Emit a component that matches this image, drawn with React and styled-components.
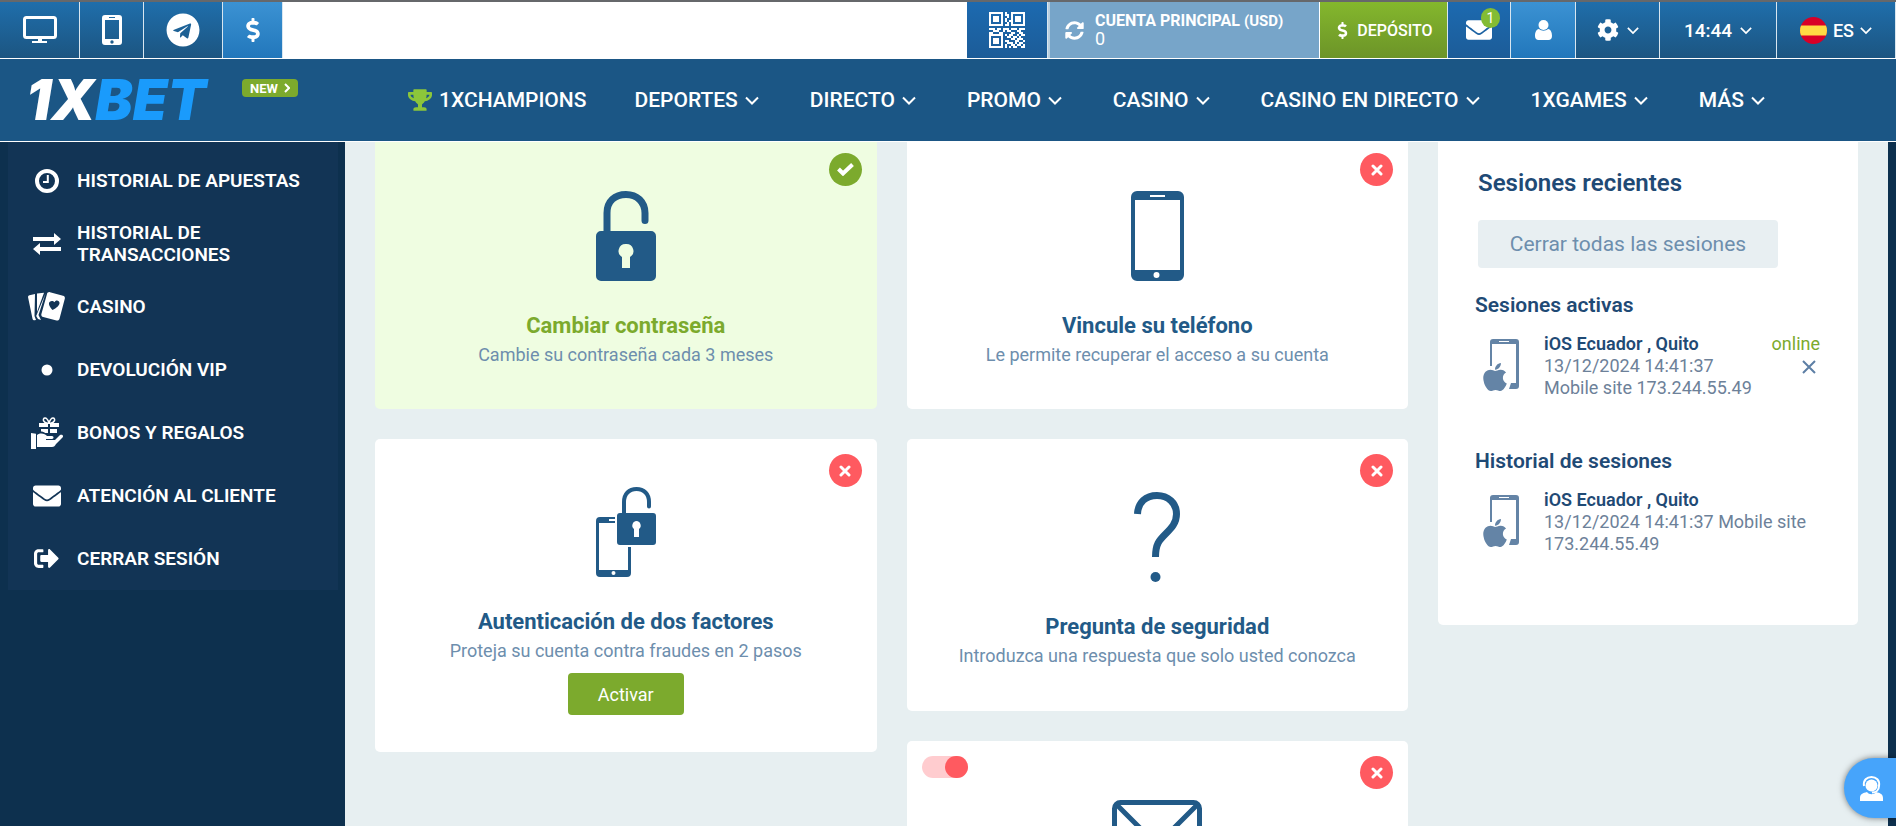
import React, { useState } from "react";
import styled, { createGlobalStyle } from "styled-components";
import {
  FaTelegram,
  FaDollarSign,
  FaSyncAlt,
  FaEnvelope,
  FaCog,
  FaTrophy,
  FaSignOutAlt,
  FaApple,
} from "react-icons/fa";

const GlobalStyle = createGlobalStyle`
  * {
    box-sizing: border-box;
  }
  body {
    margin: 0;
    background: #0d304e;
    font-family: Roboto, "Open Sans", sans-serif;
  }
  button {
    font-family: inherit;
    border: none;
    cursor: pointer;
  }
  a {
    text-decoration: none;
    color: inherit;
  }
  svg {
    display: block;
    flex: none;
  }
`;

const Page = styled.div`
  height: 100vh;
  overflow: hidden;
  display: flex;
  flex-direction: column;
`;

const TopBar = styled.header`
  flex: none;
  display: flex;
  height: 59px;
  background: #fff;
  border-top: 2px solid #66686b;
  border-bottom: 1px solid #fff;
`;

const Spacer = styled.div`
  flex: 1;
`;

const tones = {
  blue: "linear-gradient(#1f6eab, #1c5581)",
  bright: "linear-gradient(#1c6ab0, #1c5c98)",
  light: "linear-gradient(#3b92d3, #2277bb)",
  green: "linear-gradient(#84b72d, #6c9428)",
};

const Cell = styled.button`
  display: flex;
  align-items: center;
  justify-content: center;
  gap: ${(p) => p.$gap || 8}px;
  width: ${(p) => p.$w}px;
  padding: 0;
  border-right: 1px solid #d8e6f0;
  background: ${(p) => tones[p.$tone || "blue"]};
  color: #fff;
  font-size: ${(p) => p.$size || 18}px;
  font-weight: ${(p) => p.$weight || 400};
`;

const Account = styled.button`
  display: flex;
  align-items: center;
  gap: 11px;
  width: 272px;
  padding: 0 0 0 15px;
  border-left: 2px solid #b9cfe0;
  border-right: 1px solid #fff;
  background: #77a5c9;
  color: #fff;
  text-align: left;
`;

const AccountText = styled.span`
  font-size: 16px;
  line-height: 18px;
  font-weight: 700;
`;

const Currency = styled.small`
  font-size: 15px;
`;

const Balance = styled.span`
  display: block;
  font-size: 18px;
  font-weight: 400;
`;

const MailWrap = styled.span`
  position: relative;
`;

const Counter = styled.span`
  position: absolute;
  top: -9px;
  right: -8px;
  width: 19px;
  height: 20px;
  border-radius: 10px;
  background: #83bc34;
  font-size: 14px;
  line-height: 20px;
  text-align: center;
`;

const NavBar = styled.nav`
  flex: none;
  display: flex;
  align-items: center;
  height: 83px;
  padding-left: 26px;
  background: #1b5685;
  border-bottom: 1px solid #fff;
  color: #fff;
`;

const Logo = styled.a`
  width: 216px;
  font-family: Inter, sans-serif;
  font-size: 56px;
  line-height: 82px;
  font-weight: 900;
  font-style: italic;
`;

const LogoBlue = styled.span`
  color: #1a9bfc;
`;

const NewBadge = styled.a`
  display: flex;
  align-items: center;
  justify-content: center;
  gap: 6px;
  width: 56px;
  height: 18px;
  margin-bottom: 24px;
  border-radius: 4px;
  background: #7caa2d;
  font-size: 13px;
  font-weight: 700;
`;

const Menu = styled.ul`
  display: flex;
  gap: 51px;
  margin: 0 0 0 110px;
  padding: 0;
  list-style: none;

  li:first-child {
    margin-right: -3px;
  }
`;

const MenuLink = styled.a`
  display: flex;
  align-items: center;
  gap: 7px;
  font-size: 21px;
  font-weight: 500;
  white-space: nowrap;
`;

const Body = styled.div`
  flex: 1;
  min-height: 0;
  display: flex;
  padding-right: 8px;
`;

const Sidebar = styled.aside`
  flex: none;
  width: 345px;
  padding: 0 7px 0 8px;
`;

const SideMenu = styled.ul`
  margin: 0;
  padding: 7px 0 0;
  background: #123455;
  list-style: none;
`;

const SideLink = styled.a`
  display: flex;
  align-items: center;
  gap: 12px;
  height: 63px;
  padding: 0 20px;
  color: #fff;
  font-size: 19px;
  line-height: 22px;
  font-weight: 600;
`;

const SideIcon = styled.span`
  flex: none;
  display: flex;
  justify-content: center;
  width: 37px;
`;

const Content = styled.main`
  flex: 1;
  overflow: hidden;
  background: #e7eff1;
`;

const Grid = styled.div`
  display: grid;
  grid-template-columns: 1fr 1fr 420px;
  align-items: start;
  gap: 30px;
  margin-top: -4px;
  padding: 0 30px;
`;

const Column = styled.div`
  display: flex;
  flex-direction: column;
  gap: 30px;
`;

const CardBox = styled.section`
  position: relative;
  display: flex;
  flex-direction: column;
  align-items: center;
  padding: ${(p) => p.$top || 53}px 20px ${(p) => p.$bottom || 41}px;
  border-radius: 5px;
  background: ${(p) => (p.$done ? "#effde1" : "#fff")};
  color: ${(p) => (p.$done ? "#7caa2d" : "#225a87")};
  text-align: center;
`;

const CardIcon = styled.div`
  height: 90px;
  color: #225a87;
`;

const CardTitle = styled.h2`
  margin: 30px 0 0;
  font-size: 22px;
  line-height: 30px;
  font-weight: 700;
`;

const CardText = styled.p`
  margin: 1px 0 0;
  color: #6d8ead;
  font-size: 18px;
  line-height: 26px;
`;

const Badge = styled.span`
  position: absolute;
  top: 15px;
  right: 15px;
  display: flex;
  align-items: center;
  justify-content: center;
  width: 33px;
  height: 33px;
  border-radius: 50%;
  background: ${(p) => (p.$done ? "#7caa2d" : "#ff5a60")};
  color: #fff;
`;

const Activate = styled.button`
  width: 116px;
  height: 42px;
  margin-top: 9px;
  border-radius: 4px;
  background: #7caa2d;
  color: #fff;
  font-size: 18px;
`;

const Toggle = styled.input`
  position: absolute;
  top: 15px;
  left: 15px;
  appearance: none;
  width: 46px;
  height: 22px;
  margin: 0;
  border-radius: 11px;
  background: #ffcccf;
  cursor: pointer;

  &::before {
    content: "";
    display: block;
    width: 23px;
    height: 22px;
    border-radius: 11px;
    background: #ff5a60;
  }

  &:checked::before {
    margin-left: 23px;
  }
`;

const Sessions = styled.section`
  padding: 30px 38px 70px 37px;
  border-radius: 5px;
  background: #fff;
  color: #1f4a75;
`;

const SessionsTitle = styled.h2`
  margin: 0 0 22px 3px;
  font-size: 24px;
  line-height: 30px;
  font-weight: 600;
`;

const CloseAll = styled.button`
  width: 300px;
  height: 48px;
  margin-left: 3px;
  padding: 0;
  border-radius: 4px;
  background: #e8eff2;
  color: #6d8ead;
  font-size: 21px;
`;

const Subtitle = styled.h3`
  margin: ${(p) => p.$top}px 0 15px;
  font-size: 21px;
  line-height: 26px;
  font-weight: 600;
`;

const Session = styled.div`
  display: flex;
  color: #6d8199;
  font-size: 18px;
  line-height: 22px;
`;

const SessionIcon = styled.div`
  width: 69px;
  padding: 6px 0 0 8px;
  color: #6484a6;
`;

const SessionInfo = styled.div`
  flex: 1;
`;

const Device = styled.strong`
  display: block;
  color: #1f4a75;
  font-weight: 600;
`;

const Line = styled.span`
  display: block;
`;

const SessionState = styled.div`
  display: flex;
  flex-direction: column;
  align-items: flex-end;
  color: #7caa2d;
`;

const CloseSession = styled.button`
  padding: 5px 4px;
  background: none;
  color: #5d7fa5;
`;

const Support = styled.button`
  position: fixed;
  right: 0;
  bottom: 8px;
  display: flex;
  align-items: center;
  width: 52px;
  height: 60px;
  padding: 0 0 0 16px;
  border-radius: 30px 0 0 30px;
  background: #46a4fb;
  box-shadow: 0 0 6px rgba(0, 0, 0, 0.5);
  color: #fff;
`;

const Chevron = ({ width = 14, right }) => (
  <svg width={right ? 6 : width} height={right ? 10 : 9} viewBox={right ? "0 0 6 10" : "0 0 14 9"} fill="none" stroke="currentColor" strokeWidth="2">
    <path d={right ? "M1 1l4 4-4 4" : "M1 1.500l6 6 6-6"} />
  </svg>
);

const DesktopIcon = () => (
  <svg width="34" height="28" viewBox="0 0 34 28">
    <rect x="1.500" y="1.500" width="31" height="20" rx="2" fill="none" stroke="currentColor" strokeWidth="3" />
    <path d="M15 22h4v3h5v2H9v-2h6z" fill="currentColor" />
  </svg>
);

const MobileIcon = () => (
  <svg width="20" height="30" viewBox="0 0 20 30">
    <path
      fill="currentColor"
      fillRule="evenodd"
      d="M3 0h14a3 3 0 0 1 3 3v24a3 3 0 0 1-3 3H3a3 3 0 0 1-3-3V3a3 3 0 0 1 3-3zM3 5v19h14V5zM7 2v1h6V2zM10 25.300a1.700 1.700 0 1 0 0 3.400 1.700 1.700 0 0 0 0-3.400z"
    />
  </svg>
);

const qrRows = [
  "111111101001111111",
  "100000101101000001",
  "101110100101011101",
  "101110101001011101",
  "101110101011011101",
  "100000100101000001",
  "111111101101111111",
  "000000000000000000",
  "111011011101110111",
  "001110010110001100",
  "110001100001100110",
  "111111101011001011",
  "100000100110110100",
  "101110100001101110",
  "101110101100011001",
  "101110100111010110",
  "100000101001101101",
  "111111101010110011",
];

const QrIcon = () => (
  <svg width="36" height="36" viewBox="0 0 18 18" shapeRendering="crispEdges">
    {qrRows.map((row, y) =>
      row.split("").map((c, x) => (c === "1" ? <rect key={`${x}-${y}`} x={x} y={y} width="1" height="1" fill="currentColor" /> : null))
    )}
  </svg>
);

const UserIcon = () => (
  <svg width="17" height="20" viewBox="0 0 17 20" fill="currentColor">
    <circle cx="8.500" cy="5" r="5" />
    <path d="M4 9c-3 .5-4 3.500-4 7 0 2.500 1.500 4 3.500 4h10c2 0 3.500-1.500 3.500-4 0-3.500-1-6.500-4-7-1.200 1-2.700 1.700-4.500 1.700S5.200 10 4 9z" />
  </svg>
);

const SpainFlag = () => (
  <svg width="27" height="27" viewBox="0 0 27 27">
    <clipPath id="flag">
      <circle cx="13.500" cy="13.500" r="13.500" />
    </clipPath>
    <g clipPath="url(#flag)">
      <path fill="#d80027" d="M0 0h27v27H0z" />
      <path fill="#ffda44" d="M0 8.500h27v10H0z" />
    </g>
  </svg>
);

const ClockIcon = () => (
  <svg width="24" height="24" viewBox="0 0 24 24" fill="none" stroke="currentColor">
    <circle cx="12" cy="12" r="10" strokeWidth="4" />
    <path d="M12.800 6v7H8" strokeWidth="2" />
  </svg>
);

const ExchangeIcon = () => (
  <svg width="28" height="22" viewBox="0 0 28 22" fill="currentColor">
    <path d="M0 4h21V0l7 6-7 6V8H0zM28 18H7v4l-7-6 7-6v4h21z" />
  </svg>
);

const CardsIcon = () => (
  <svg width="37" height="29" viewBox="0 0 37 29" fill="currentColor">
    <path d="M0 5c0-1 .5-1.500 1.500-1.800L7 2l-.5 22 1.500 4-1.500.3c-1 0-1.700-.5-2-1.500z" />
    <path d="M9 1.500L16 .8 9 20z" />
    <path d="M17.500 1.500L10.500 23l2.500 5-3-1-1.800-3z" />
    <path
      fillRule="evenodd"
      d="M22 .2l13 3.600c1.500.4 2.200 1.600 1.800 3l-5.300 20c-.4 1.500-1.600 2.100-3 1.700L15.200 25c-1.500-.4-2.200-1.600-1.800-3L19 2C19.400.5 20.600-.2 22 .2zM24.500 18c4-2 7-4.500 7-7 0-3-4-3.500-5-.8-2-2.400-6-1-5.500 2 .3 2.200 2 4 3.500 5.800z"
    />
  </svg>
);

const GiftIcon = () => (
  <svg width="32" height="32" viewBox="0 0 32 32" fill="currentColor">
    <path d="M0 16l5 .8V32H0zM6 18c4-3 8-1 10 1h5c2 0 2 3 0 3h-6v1h9l5-5c2-1 4 .5 2.500 2.500L25 27c-1 2-2 3-4 3H6z" />
    <path d="M8 6h9v4H8zM19 6h9v4h-9zM10 12h7v4h-3c-1-1-2.500-1.500-4-1.500zM19 12h7v4h-7z" />
    <path d="M18 6c-6 1-7-5-4-5 2 0 3 2 4 5zm0 0c6 1 7-5 4-5-2 0-3 2-4 5z" fill="none" stroke="currentColor" strokeWidth="1.500" />
  </svg>
);

const DotIcon = () => (
  <svg width="12" height="12" viewBox="0 0 12 12">
    <circle cx="6" cy="6" r="5.500" fill="currentColor" />
  </svg>
);

const PadlockIcon = () => (
  <svg width="60" height="90" viewBox="0 0 60 90">
    <path d="M11 44V22C11 10 19 3.500 30 3.500S49 11 49 22v7.500" fill="none" stroke="currentColor" strokeWidth="7" strokeLinecap="round" />
    <path
      fill="currentColor"
      fillRule="evenodd"
      d="M5 40h50a5 5 0 0 1 5 5v40a5 5 0 0 1-5 5H5a5 5 0 0 1-5-5V45a5 5 0 0 1 5-5zM30 53a7 7 0 0 0-4 13v11h8V66a7 7 0 0 0-4-13z"
    />
  </svg>
);

const PhoneIcon = () => (
  <svg width="53" height="90" viewBox="0 0 53 90">
    <path
      fill="currentColor"
      fillRule="evenodd"
      d="M6 0h41a6 6 0 0 1 6 6v78a6 6 0 0 1-6 6H6a6 6 0 0 1-6-6V6a6 6 0 0 1 6-6zM4 9v70h45V9zM19 4v2h15V4zM25.500 81a3 3 0 1 0 0 6 3 3 0 0 0 0-6z"
    />
  </svg>
);

const TwoFactorIcon = () => (
  <svg width="60" height="90" viewBox="0 0 60 90">
    <path
      fill="currentColor"
      fillRule="evenodd"
      d="M4 30h15v2h-6v2h6v2H3v47h29V60h3v26a4 4 0 0 1-4 4H4a4 4 0 0 1-4-4V34a4 4 0 0 1 4-4zM17.500 84a2 2 0 1 0 0 4 2 2 0 0 0 0-4z"
    />
    <path d="M28 28V15C28 7 33 2 40.500 2S53 7 53 15v4.500" fill="none" stroke="currentColor" strokeWidth="4" strokeLinecap="round" />
    <path
      fill="currentColor"
      fillRule="evenodd"
      d="M24 26h33a3 3 0 0 1 3 3v26a3 3 0 0 1-3 3H24a3 3 0 0 1-3-3V29a3 3 0 0 1 3-3zM40.500 34a4.500 4.500 0 0 0-2.500 8v8h5v-8a4.500 4.500 0 0 0-2.500-8z"
    />
  </svg>
);

const QuestionIcon = () => (
  <svg width="46" height="90" viewBox="0 0 46 90">
    <path d="M3.500 22C4 10 12 3.500 23 3.500S42.500 11 42.500 22c0 9-5 14-11 20C25 48.500 21.500 52 21.500 65" fill="none" stroke="currentColor" strokeWidth="7" />
    <circle cx="21.500" cy="85" r="5" fill="currentColor" />
  </svg>
);

const MailIcon = () => (
  <svg width="90" height="68" viewBox="0 0 90 68" fill="none" stroke="currentColor" strokeWidth="5">
    <rect x="2.500" y="2.500" width="85" height="63" rx="6" />
    <path d="M4 4l36 36c3 3 7 3 10 0L86 4" />
  </svg>
);

const CrossIcon = () => (
  <svg width="12" height="12" viewBox="0 0 12 12" stroke="currentColor" strokeWidth="3" strokeLinecap="round">
    <path d="M2 2l8 8M10 2l-8 8" />
  </svg>
);

const CheckIcon = () => (
  <svg width="17" height="13" viewBox="0 0 17 13" fill="none" stroke="currentColor" strokeWidth="4">
    <path d="M1.500 6L6 10.500 15.500 1.500" />
  </svg>
);

const ThinCross = () => (
  <svg width="14" height="14" viewBox="0 0 14 14" stroke="currentColor" strokeWidth="2">
    <path d="M1 1l12 12M13 1L1 13" />
  </svg>
);

const ApplePhoneIcon = () => (
  <svg width="36" height="53" viewBox="0 0 36 53">
    <path
      fill="currentColor"
      fillRule="evenodd"
      d="M10 0h23a3 3 0 0 1 3 3v44a3 3 0 0 1-3 3h-7l2-6h5V5H9v22H7V3a3 3 0 0 1 3-3zM16 2v1h10V2z"
    />
    <FaApple x="-4" y="22" size={32} />
  </svg>
);

const SupportIcon = () => (
  <svg width="23" height="25" viewBox="0 0 23 25" fill="currentColor">
    <circle cx="11.500" cy="9.500" r="6" />
    <path d="M4 10C3 4 7 1 11.500 1S20 4 19 10c0 4-3 6.500-7 6.500" fill="none" stroke="currentColor" strokeWidth="2" />
    <path d="M0 25v-3c0-4 3-5 7-6 2 3 7 3 9 0 4 1 7 2 7 6v3z" />
  </svg>
);

const menu = ["DEPORTES", "DIRECTO", "PROMO", "CASINO", "CASINO EN DIRECTO", "1XGAMES", "MÁS"];

const sideItems = [
  { name: "HISTORIAL DE APUESTAS", icon: <ClockIcon /> },
  { name: "HISTORIAL DE TRANSACCIONES", icon: <ExchangeIcon /> },
  { name: "CASINO", icon: <CardsIcon /> },
  { name: "DEVOLUCIÓN VIP", icon: <DotIcon /> },
  { name: "BONOS Y REGALOS", icon: <GiftIcon /> },
  { name: "ATENCIÓN AL CLIENTE", icon: <FaEnvelope size={28} /> },
  { name: "CERRAR SESIÓN", icon: <FaSignOutAlt size={25} /> },
];

function Card({ icon, title, text, done, top, bottom, children }) {
  return (
    <CardBox $done={done} $top={top} $bottom={bottom}>
      <Badge $done={done}>{done ? <CheckIcon /> : <CrossIcon />}</Badge>
      <CardIcon>{icon}</CardIcon>
      {title && <CardTitle>{title}</CardTitle>}
      {text && <CardText>{text}</CardText>}
      {children}
    </CardBox>
  );
}

function App() {
  const [mailLogin, setMailLogin] = useState(true);

  return (
    <Page>
      <GlobalStyle />
      <TopBar>
        <Cell $w={80} aria-label="Escritorio"><DesktopIcon /></Cell>
        <Cell $w={64} aria-label="Móvil"><MobileIcon /></Cell>
        <Cell $w={79} aria-label="Telegram"><FaTelegram size={34} /></Cell>
        <Cell $w={60} $tone="light" aria-label="Pagos"><FaDollarSign size={24} /></Cell>
        <Spacer />
        <Cell $w={81} $tone="bright" aria-label="Código QR"><QrIcon /></Cell>
        <Account>
          <FaSyncAlt size={19} />
          <AccountText>
            CUENTA PRINCIPAL <Currency>(USD)</Currency>
            <Balance>0</Balance>
          </AccountText>
        </Account>
        <Cell $w={128} $tone="green" $size={16} $weight={500} $gap={6}>
          <FaDollarSign size={17} />
          DEPÓSITO
        </Cell>
        <Cell $w={63} $tone="bright" aria-label="Mensajes">
          <MailWrap>
            <FaEnvelope size={26} />
            <Counter>1</Counter>
          </MailWrap>
        </Cell>
        <Cell $w={65} $tone="light" aria-label="Mi cuenta"><UserIcon /></Cell>
        <Cell $w={84} aria-label="Ajustes">
          <FaCog size={22} />
          <Chevron width={12} />
        </Cell>
        <Cell $w={117} $size={19} $weight={500}>
          14:44
          <Chevron width={12} />
        </Cell>
        <Cell $w={119} $gap={6} $weight={500}>
          <SpainFlag />
          ES
          <Chevron width={12} />
        </Cell>
      </TopBar>

      <NavBar>
        <Logo href="#">
          1X<LogoBlue>BET</LogoBlue>
        </Logo>
        <NewBadge href="#">
          NEW
          <Chevron right />
        </NewBadge>
        <Menu>
          <li>
            <MenuLink href="#">
              <FaTrophy size={24} color="#8cc63a" />
              1XCHAMPIONS
            </MenuLink>
          </li>
          {menu.map((name) => (
            <li key={name}>
              <MenuLink href="#">
                {name}
                <Chevron />
              </MenuLink>
            </li>
          ))}
        </Menu>
      </NavBar>

      <Body>
        <Sidebar>
          <SideMenu>
            {sideItems.map((item) => (
              <li key={item.name}>
                <SideLink href="#">
                  <SideIcon>{item.icon}</SideIcon>
                  {item.name}
                </SideLink>
              </li>
            ))}
          </SideMenu>
        </Sidebar>

        <Content>
          <Grid>
            <Column>
              <Card done icon={<PadlockIcon />} title="Cambiar contraseña" text="Cambie su contraseña cada 3 meses" />
              <Card
                top={48}
                bottom={37}
                icon={<TwoFactorIcon />}
                title="Autenticación de dos factores"
                text="Proteja su cuenta contra fraudes en 2 pasos"
              >
                <Activate>Activar</Activate>
              </Card>
            </Column>
            <Column>
              <Card icon={<PhoneIcon />} title="Vincule su teléfono" text="Le permite recuperar el acceso a su cuenta" />
              <Card
                bottom={42}
                icon={<QuestionIcon />}
                title="Pregunta de seguridad"
                text="Introduzca una respuesta que solo usted conozca"
              />
              <Card top={59} icon={<MailIcon />}>
                <Toggle
                  type="checkbox"
                  aria-label="Correo electrónico"
                  checked={mailLogin}
                  onChange={(e) => setMailLogin(e.target.checked)}
                />
              </Card>
            </Column>
            <Sessions>
              <SessionsTitle>Sesiones recientes</SessionsTitle>
              <CloseAll>Cerrar todas las sesiones</CloseAll>
              <Subtitle $top={24}>Sesiones activas</Subtitle>
              <Session>
                <SessionIcon><ApplePhoneIcon /></SessionIcon>
                <SessionInfo>
                  <Device>iOS Ecuador , Quito</Device>
                  <Line>13/12/2024 14:41:37</Line>
                  <Line>Mobile site 173.244.55.49</Line>
                </SessionInfo>
                <SessionState>
                  online
                  <CloseSession aria-label="Cerrar sesión"><ThinCross /></CloseSession>
                </SessionState>
              </Session>
              <Subtitle $top={49}>Historial de sesiones</Subtitle>
              <Session>
                <SessionIcon><ApplePhoneIcon /></SessionIcon>
                <SessionInfo>
                  <Device>iOS Ecuador , Quito</Device>
                  <Line>13/12/2024 14:41:37 Mobile site 173.244.55.49</Line>
                </SessionInfo>
              </Session>
            </Sessions>
          </Grid>
        </Content>
      </Body>

      <Support aria-label="Soporte"><SupportIcon /></Support>
    </Page>
  );
}

export default App;
